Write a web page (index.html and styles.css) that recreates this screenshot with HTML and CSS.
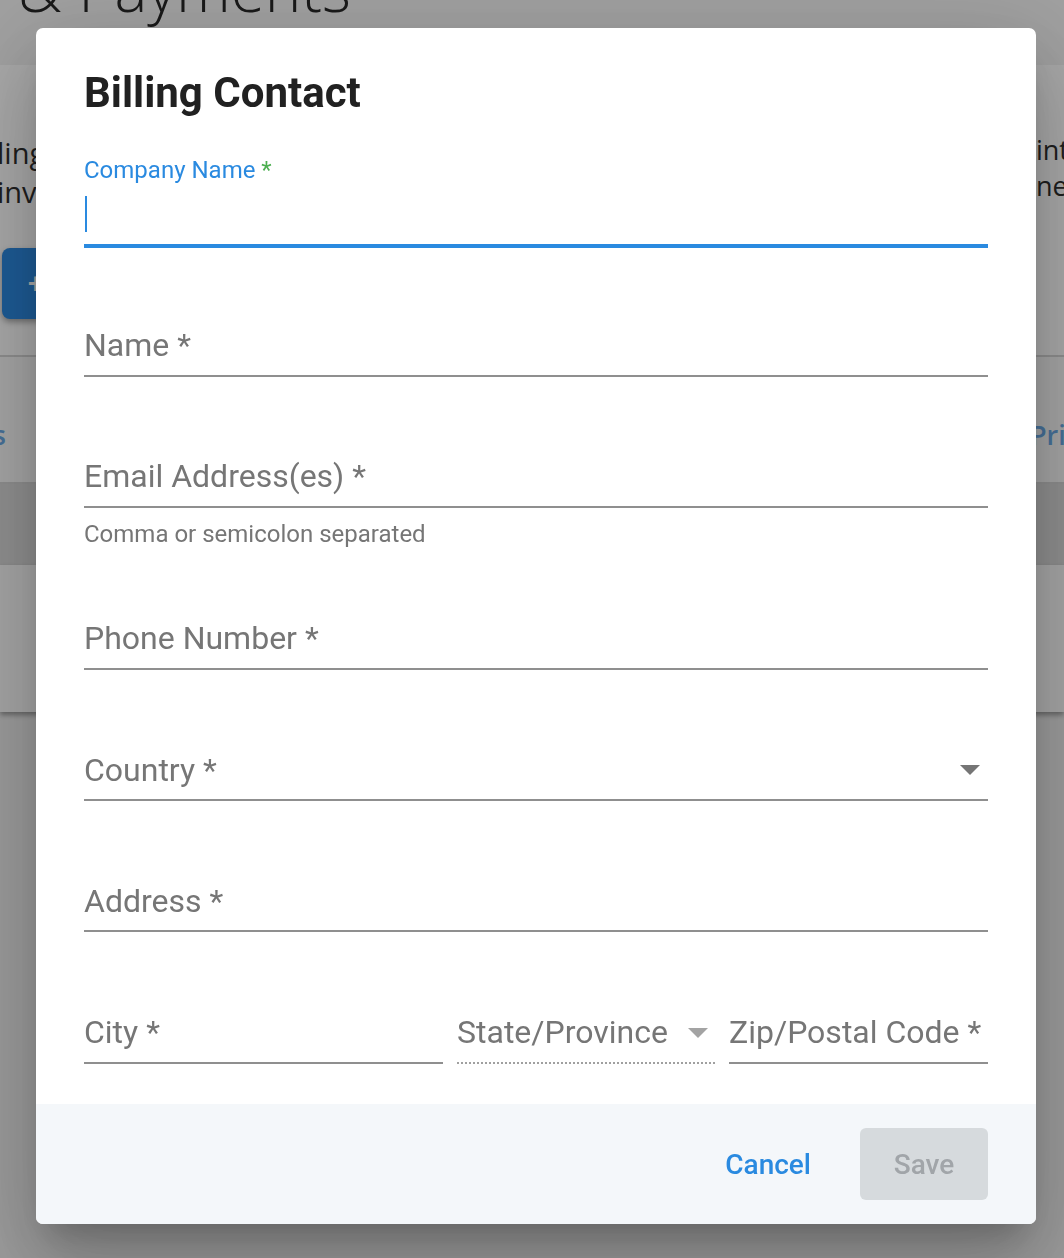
FILE: index.html
```html
<!DOCTYPE html>
<html lang="en">
<head>
<meta charset="utf-8">
<title>Billing Contact</title>
<link rel="stylesheet" href="styles.css">
</head>
<body>
<div class="page">
  <header class="page-head">
    <h1 class="page-title">&amp; Payments</h1>
  </header>
  <section class="card">
    <div class="card-left">
      <p class="card-text">ling details</p>
      <p class="card-text">invoices</p>
      <button class="primary-btn" type="button">+ Add Contact</button>
    </div>
    <div class="card-right">
      <p class="card-text">integrations</p>
      <p class="card-text">needed</p>
    </div>
  </section>
  <nav class="tabs">
    <div class="tab tab-left"><span>Contacts</span></div>
    <div class="tab tab-right"><span>Pricing</span></div>
  </nav>
  <div class="band"></div>
  <div class="section"></div>
</div>

<div class="overlay"></div>

<div class="dialog" role="dialog" aria-labelledby="dlg-title">
  <div class="dialog-body">
    <h2 class="dialog-title" id="dlg-title">Billing Contact</h2>

    <div class="field field--focused">
      <div class="label-shrink">Company Name <span class="req">*</span></div>
      <div class="field-input"><span class="caret"></span></div>
    </div>

    <div class="field">
      <div class="field-input"><span class="ph">Name *</span></div>
    </div>

    <div class="field field--helper">
      <div class="field-input"><span class="ph">Email Address(es) *</span></div>
      <div class="helper">Comma or semicolon separated</div>
    </div>

    <div class="field">
      <div class="field-input"><span class="ph">Phone Number *</span></div>
    </div>

    <div class="field">
      <div class="field-input"><span class="ph">Country *</span>
        <svg class="arrow" width="20" height="10" viewBox="0 0 20 10"><path d="M0 0L10 10L20 0Z"/></svg>
      </div>
    </div>

    <div class="field">
      <div class="field-input"><span class="ph">Address *</span></div>
    </div>

    <div class="field field-row">
      <div class="sub">
        <div class="field-input"><span class="ph">City *</span></div>
      </div>
      <div class="sub">
        <div class="field-input field-input--disabled"><span class="ph">State/Province</span>
          <svg class="arrow arrow--disabled" width="20" height="10" viewBox="0 0 20 10"><path d="M0 0L10 10L20 0Z"/></svg>
        </div>
      </div>
      <div class="sub">
        <div class="field-input"><span class="ph">Zip/Postal Code *</span></div>
      </div>
    </div>
  </div>

  <div class="dialog-actions">
    <button class="btn-text" type="button">Cancel</button>
    <button class="btn-save" type="button" disabled>Save</button>
  </div>
</div>
</body>
</html>
```

FILE: styles.css
```css
html, body {
  margin: 0;
  padding: 0;
}

body {
  width: 1064px;
  height: 1258px;
  overflow: hidden;
  background: #ececec;
  font-family: Roboto, "Liberation Sans", Arial, sans-serif;
}

/* ---------- background page ---------- */
.page {
  height: 1258px;
}

.page-head {
  height: 65px;
  background: #f3f3f3;
  overflow: hidden;
}

.page-title {
  margin: -43px 0 0 18px;
  font-family: "Open Sans", "Noto Sans", sans-serif;
  font-weight: 300;
  font-size: 62px;
  line-height: 62px;
  color: #262626;
  white-space: nowrap;
}

.card {
  height: 290px;
  background: #ffffff;
  border-bottom: 2px solid #d6d6d6;
  display: flex;
  justify-content: space-between;
}

.card-left {
  padding: 68px 0 0 0;
  margin-left: -3px;
}

.card-right {
  padding-top: 67px;
  width: 28px;
  white-space: nowrap;
}

.card-text {
  margin: 0;
  font-family: "Open Sans", "Noto Sans", sans-serif;
  font-size: 29px;
  line-height: 39px;
  color: #2e2e2e;
  white-space: nowrap;
}

.card-right .card-text {
  font-size: 27px;
  line-height: 36px;
}

.primary-btn {
  margin: 37px 0 0 5px;
  width: 220px;
  height: 71px;
  border: none;
  border-radius: 8px;
  background: #2c8ae2;
  color: #ffffff;
  font-family: Roboto, sans-serif;
  font-size: 28px;
  font-weight: 500;
  text-align: left;
  padding-left: 26px;
  box-shadow: 0 3px 6px rgba(0, 0, 0, 0.35);
}

.tabs {
  height: 125px;
  border-bottom: 2px solid #d6d6d6;
  background: #fafafa;
  display: flex;
  justify-content: space-between;
  align-items: flex-start;
}

.tab {
  margin-top: 59px;
  font-family: "Open Sans", "Noto Sans", sans-serif;
  font-weight: 600;
  font-size: 27px;
  line-height: 38px;
  color: #6aa9e6;
  white-space: nowrap;
  display: flex;
}

.tab-left {
  width: 6px;
  justify-content: flex-end;
}

.tab-right {
  width: 34px;
  justify-content: flex-start;
}

.band {
  height: 81px;
  background: #d9d9d9;
}

.section {
  height: 147px;
  background: #fbfbfb;
  box-shadow: 0 3px 5px rgba(0, 0, 0, 0.35);
}

/* ---------- overlay ---------- */
.overlay {
  position: fixed;
  inset: 0;
  background: rgba(0, 0, 0, 0.34);
}

/* ---------- dialog ---------- */
.dialog {
  position: fixed;
  left: 36px;
  top: 28px;
  width: 1000px;
  height: 1196px;
  background: #ffffff;
  border-radius: 7px;
  overflow: hidden;
  display: flex;
  flex-direction: column;
  box-shadow:
    0 22px 30px -14px rgba(0, 0, 0, 0.2),
    0 48px 76px 6px rgba(0, 0, 0, 0.14),
    0 18px 92px 16px rgba(0, 0, 0, 0.12);
}

.dialog-body {
  flex: 1;
  padding: 40px 48px 0 48px;
}

.dialog-title {
  margin: 0;
  font-size: 42px;
  line-height: 50px;
  font-weight: 700;
  color: #212121;
}

.field {
  margin-top: 41.75px;
  padding-top: 28px;
}

.field--focused {
  margin-top: 38px;
  padding-top: 0;
}

.field--focused + .field {
  margin-top: 39.5px;
}

.field--helper + .field {
  margin-top: 26.5px;
}

.label-shrink {
  height: 28px;
  font-size: 24px;
  line-height: 28px;
  color: #2a8ae0;
  white-space: nowrap;
}

.req {
  color: #4caf50;
}

.field-input {
  display: flex;
  align-items: center;
  height: 38px;
  padding: 11px 0 10.5px;
  border-bottom: 2px solid #8f8f8f;
  font-size: 32px;
  line-height: 38px;
  color: #767676;
  white-space: nowrap;
}

.field--focused .field-input {
  border-bottom: 4px solid #2a8ae0;
}

.field-input--disabled {
  border-bottom: 2px dotted #a0a0a0;
}

.caret {
  display: block;
  width: 2px;
  height: 36px;
  margin-left: 1px;
  background: #2a8ae0;
}

.ph {
  flex: 1;
}

.arrow {
  flex: none;
  margin-right: 8px;
  margin-top: 1px;
  fill: #757575;
}

.arrow--disabled {
  fill: #a3a3a3;
  margin-right: 7px;
}

.helper {
  margin-top: 6px;
  font-size: 24px;
  line-height: 40px;
  color: #767676;
}

.field-row {
  display: grid;
  grid-template-columns: 359px 258px 1fr;
  column-gap: 14px;
}

/* ---------- actions ---------- */
.dialog-actions {
  flex: none;
  height: 120px;
  background: #f4f7fa;
  display: flex;
  justify-content: flex-end;
  align-items: center;
  gap: 28px;
  padding: 0 48px;
}

.btn-text {
  height: 72px;
  padding: 0 21px;
  border: none;
  background: transparent;
  font-family: Roboto, "Liberation Sans", sans-serif;
  font-size: 28px;
  font-weight: 500;
  color: #2a8ae0;
}

.btn-save {
  width: 128px;
  height: 72px;
  border: none;
  border-radius: 6px;
  background: #d6dadd;
  font-family: Roboto, "Liberation Sans", sans-serif;
  font-size: 28px;
  font-weight: 500;
  color: #a1a5a9;
}
```
